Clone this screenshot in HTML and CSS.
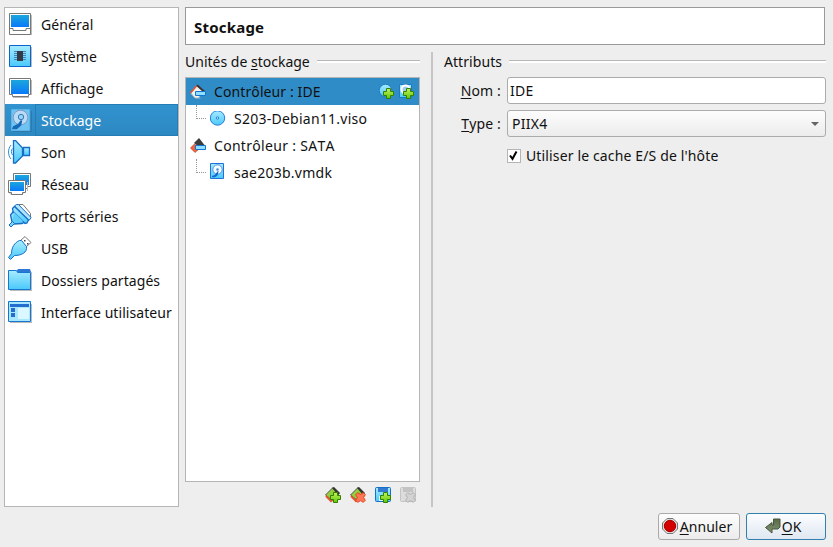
FILE: index.html
```html
<!DOCTYPE html>
<html lang="fr">
<head>
<meta charset="utf-8">
<title>Stockage</title>
<link rel="stylesheet" href="styles.css">
</head>
<body>
<svg class="defs" aria-hidden="true">
  <defs>
    <linearGradient id="screen" x2="0" y2="1"><stop stop-color="#1ba6dc"/><stop offset="1" stop-color="#0879fa"/></linearGradient>
    <linearGradient id="sky" x2="0" y2="1"><stop stop-color="#a8ebff"/><stop offset="1" stop-color="#49c9fa"/></linearGradient>
    <linearGradient id="leaf" x2="0" y2="1"><stop stop-color="#c4f25a"/><stop offset="1" stop-color="#5fc80c"/></linearGradient>
    <linearGradient id="olive" x2="0" y2="1"><stop stop-color="#596a48"/><stop offset="1" stop-color="#819373"/></linearGradient>
    <symbol id="plus" viewBox="0 0 11 11"><path d="M3.500 .5h4v3h3v4h-3v3h-4v-3h-3v-4h3z" fill="url(#leaf)" stroke="#348000"/></symbol>
    <symbol id="cross" viewBox="0 0 11 11"><path d="M.7 2.700 2.700.7 5.500 2.400 8.300.7l2 2L8.600 5.500l1.700 2.800-2 2-2.800-1.700-2.800 1.700-2-2 1.700-2.800z" fill="#ff7654" stroke="#e04420"/></symbol>
    <symbol id="disk" viewBox="0 0 16 16"><path d="M1.500 .5h13v15h-13z" fill="url(#sky)" stroke="#1f72dc"/><circle cx="8.500" cy="6.500" r="4.700" fill="#f4fbff" stroke="#4c93e0"/><circle cx="8.500" cy="6.500" r="1.200" fill="#3f87dc"/><path d="M3 13.500l3-1 3-4-1 4-3 1.500z" fill="#1469cd" stroke="#1469cd"/></symbol>
  </defs>
</svg>
<div class="dialog">
  <nav class="sidebar">
    <div class="item"><svg class="icon" viewBox="0 0 24 24"><path d="M3 23h21V3h-1v19z" fill="#bbb"/><path d="M1.500 1.500h21v21h-21z" fill="#fff" stroke="#777"/><path d="M3 3h18v12H3z" fill="url(#screen)"/><path d="M2 16.500h3v2h13v-2h4" fill="none" stroke="#777"/></svg><span>Général</span></div>
    <div class="item"><svg class="icon" viewBox="0 0 24 24"><path d="M3 23h21V3h-1v19z" fill="#bbb"/><path d="M1.500 1.500h21v21h-21z" fill="url(#sky)" stroke="#0c64d0"/><path d="M6 7.500h12M6 9.500h12M6 11.500h12M6 13.500h12M6 15.500h12" stroke="#3b87bb"/><path d="M9 7h6v10H9z" fill="#353b46"/></svg><span>Système</span></div>
    <div class="item"><svg class="icon" viewBox="0 0 24 24"><path d="M5 21.500h16M23.500 4v15" stroke="#bbb"/><path d="M1.500 2.500h21v16h-2v2h-16v-2h-3z" fill="#fff" stroke="#777"/><path d="M3 4h18v14H3z" fill="url(#screen)"/></svg><span>Affichage</span></div>
    <div class="item selected"><svg class="icon" viewBox="0 0 24 24"><path d="M4 23.500h19.500V3" fill="none" stroke="#3178a8"/><path d="M3.500 1.500h18v21h-18z" fill="#6fc3f3" stroke="#58b5ec"/><circle cx="12.500" cy="9.500" r="7.300" fill="#b8dcf6" stroke="#8495c0"/><circle cx="13" cy="9" r="2.700" fill="#8fd4fb" stroke="#3e79b4"/><path d="M5.500 19l5-2.500 3-4-1 4.500-4 3.500H5z" fill="#1569b9" stroke="#1569b9" stroke-width="1.500"/></svg><span>Stockage</span></div>
    <div class="item"><svg class="icon" viewBox="0 0 24 24"><path d="M5.500 .5h2l7 7.500v8l-7 7h-2z" fill="url(#sky)" stroke="#176dc6" stroke-width="1.300"/><path d="M15.500 7.500h6v8h-6z" fill="url(#sky)" stroke="#176dc6" stroke-width="1.300"/><path d="M4.500 8.500c-1.500 1.500-1.500 5 0 6.500M3 5c-3.300 4-3.300 10 0 14" fill="none" stroke="#2a8ed8"/></svg><span>Son</span></div>
    <div class="item"><svg class="icon" viewBox="0 0 24 24"><path d="M6 1.500h16.500v13h-3v2H9v-2H5.500v-13z" fill="#fff" stroke="#777"/><path d="M7 3h14v10H7z" fill="url(#screen)"/><path d="M1 21h14v1H2M19.500 10v9" stroke="#bbb" fill="none"/><path d="M.5 8.500h17v12h-3v2h-11v-2h-3z" fill="#fff" stroke="#777"/><path d="M2 10h14v9H2z" fill="url(#screen)"/></svg><span>Réseau</span></div>
    <div class="item"><svg class="icon" viewBox="0 0 24 24"><path d="M11 .5h4l7.500 9v4h-3L9 2z" fill="#fff" stroke="#777"/><path d="M5 8L2.500 11l1.500 7 2 2 8-.500 5-3z" fill="url(#sky)" stroke="#176dc6" stroke-width="1.300"/><path d="M6.500 2l2-1.500h2L23 13.500l-1 2-2 1z" fill="#b1e5ff" stroke="#176dc6"/><path d="M4.500 4.500l2-2L20.500 16l-1.500 3-2 .500-12-12z" fill="url(#sky)" stroke="#176dc6" stroke-width="1.300"/><path d="M6 8l9.500 9.500-8 1L5 16z" fill="#5fcdf9"/><path d="M4.500 17.500l2 2-3.500 3.500-2-2z" fill="#75d5fa" stroke="#176dc6"/></svg><span>Ports séries</span></div>
    <div class="item"><svg class="icon" viewBox="0 0 24 24"><path d="M12 5l5-4.500 6 6-5 4.500z" fill="#fff" stroke="#777"/><path d="M16 4h1.500v1.500H16zm3 3h1.500v1.500H19z" fill="#444"/><path d="M11.500 4.500h2l5 6c1 6-5 9-12 9l-4 4-2-2 3-4c0-6 3-11 8-13z" fill="url(#sky)" stroke="#176dc6"/></svg><span>USB</span></div>
    <div class="item"><svg class="icon" viewBox="0 0 24 24"><path d="M2 22.500h22M23.500 4v18" stroke="#bbb"/><path d="M8 4l2-3h12l1 3z" fill="#2c79d5"/><path d="M.5 2.500h8l1 2h13v17H.5z" fill="url(#sky)" stroke="#1976d0"/></svg><span>Dossiers partagés</span></div>
    <div class="item"><svg class="icon" viewBox="0 0 24 24"><path d="M2 22.500h22M23.500 4v18" stroke="#bbb"/><path d="M.5 1.500h22v20H.5z" fill="#a9e7ff" stroke="#1976d0"/><path d="M2 4h19v3H2zM3 8h4v4H3zm0 5h4v4H3z" fill="#246dce"/><path d="M10 8h11v11H10z" fill="#dbf7ff"/></svg><span>Interface utilisateur</span></div>
  </nav>
  <main class="content">
    <h1 class="title">Stockage</h1>
    <div class="panes">
      <section class="units">
        <h2 class="group"><span>Unités de <u>s</u>tockage</span></h2>
        <div class="tree">
          <div class="row current"><svg class="small" viewBox="0 0 16 16"><path d="M1 9 7 2l7 6-6 6H5z" fill="#f3f3ef"/><path d="M.6 9 6.600 1.800" stroke="#ed562b" stroke-width="1.500"/><path d="M7 1.200l7 6.300" stroke="#3b3234" stroke-width="2"/><path d="M.8 9.500l4.500 4.500h5" fill="none" stroke="#bbb"/><path d="M5.500 7.500h10v4h-10z" fill="#8de0ff" stroke="#1674d0"/></svg><span>Contrôleur : IDE</span>
            <div class="actions">
              <svg viewBox="0 0 16 16"><circle cx="6.500" cy="6.500" r="6.300" fill="url(#sky)" stroke="#1d79c4"/><use href="#plus" x="4" y="4" width="11" height="11"/></svg>
              <svg viewBox="0 0 16 16"><path d="M.5 .5h12v13H.5z" fill="url(#sky)" stroke="#1d79c4"/><circle cx="6.500" cy="5.500" r="4" fill="#9bcdf1" stroke="#fff" stroke-width="2"/><use href="#plus" x="4" y="4" width="11" height="11"/></svg>
            </div>
          </div>
          <div class="row child"><i class="branch"></i><svg class="small" viewBox="0 0 16 16"><circle cx="7.500" cy="7" r="7.200" fill="url(#sky)" stroke="#2879dc"/><circle cx="7.500" cy="7" r="1.200" fill="#d8f6ff" stroke="#2879dc"/></svg><span>S203-Debian11.viso</span></div>
          <div class="row sata"><svg class="small" viewBox="0 0 16 16"><path d="M4 5l5-5 5.500 7L9 9z" fill="#3c3c3c"/><path d="M.5 10l4-4 5 4.500L5 14.500z" fill="#f36338" stroke="#b9462a" stroke-width=".7"/><path d="M5.500 7.500h10v4h-10z" fill="#8de0ff" stroke="#1674d0"/></svg><span>Contrôleur : SATA</span></div>
          <div class="row child"><i class="branch"></i><svg class="small drive" viewBox="0 0 16 16"><use href="#disk" width="16" height="16"/></svg><span>sae203b.vmdk</span></div>
        </div>
        <div class="toolbar">
          <svg viewBox="0 0 16 16"><path d="M.5 8 8 .5l6 6-6 7.500z" fill="#93ce3d" stroke="#555"/><path d="M7 1l2-1 6 6-2 2z" fill="#333"/><path d="M1 9l5 5 2-2" fill="none" stroke="#df5832" stroke-width="2"/><use href="#plus" x="5" y="5" width="11" height="11"/></svg>
          <svg viewBox="0 0 16 16"><path d="M.5 8 8 .5l6 6-6 7.500z" fill="#93ce3d" stroke="#555"/><path d="M7 1l2-1 6 6-2 2z" fill="#333"/><path d="M1 9l5 5 2-2" fill="none" stroke="#df5832" stroke-width="2"/><use href="#cross" x="5" y="5" width="11" height="11"/></svg>
          <svg viewBox="0 0 16 16"><rect x=".5" y=".5" width="15" height="14" rx="1" fill="url(#sky)" stroke="#176fc6"/><path d="M3 1h10v4H3z" fill="#337bd0"/><path d="M4 9h8v5H4z" fill="#d9f7ff"/><use href="#plus" x="5" y="5" width="11" height="11"/></svg>
          <svg viewBox="0 0 16 16"><rect x=".5" y=".5" width="15" height="14" rx="1" fill="#dcdcdc" stroke="#c4c4c4"/><path d="M3 1h10v4H3z" fill="#c3c3c3"/><path d="M5.700 7.700l2-2 2.800 1.700 2.800-1.700 2 2-1.700 2.800 1.700 2.800-2 2-2.800-1.700-2.800 1.700-2-2 1.700-2.800z" fill="#d3d3d3" stroke="#b0b0b0"/></svg>
        </div>
      </section>
      <div class="splitter"></div>
      <section class="attributes">
        <h2 class="group"><span>Attributs</span></h2>
        <div class="form">
          <label for="name"><u>N</u>om :</label>
          <div class="field" id="name">IDE</div>
          <label for="type"><u>T</u>ype :</label>
          <div class="field combo" id="type"><span>PIIX4</span><svg width="8" height="4" viewBox="0 0 8 4"><path d="M0 0h8L4 4z" fill="#656565"/></svg></div>
          <div class="check"><span class="box"><svg width="11" height="11" viewBox="0 0 11 11"><path d="M2 5.500 4.500 8.800 8.500 1.500" fill="none" stroke="#000" stroke-width="2"/></svg></span><span>Utiliser le cache E/S de l'hôte</span></div>
        </div>
      </section>
    </div>
  </main>
  <footer class="buttons">
    <button class="button cancel"><svg viewBox="0 0 16 16"><path d="M5 .5h6L15.500 5v6L11 15.500H5L.5 11V5z" fill="#ddd" stroke="#777"/><circle cx="8" cy="8" r="5.700" fill="#d40000" stroke="#a00"/></svg><span><u>A</u>nnuler</span></button>
    <button class="button ok"><svg viewBox="0 0 16 16"><path d="M8.500 1h6.500v8l-2 2H7v4L.5 9.500 7 4.500V7h1.500z" fill="url(#olive)" stroke="#46563b"/></svg><span><u>O</u>K</span></button>
  </footer>
</div>
</body>
</html>
```
FILE: styles.css
```css
* { box-sizing: border-box; }
body {
  margin: 0;
  background: #eee;
  color: #111;
  font: 14px/20px "Noto Sans", sans-serif;
  font-kerning: none;
  letter-spacing: .06px;
}
svg { display: block; flex: none; }
.defs { position: absolute; width: 0; height: 0; }
h1, h2 { margin: 0; }
u { text-decoration: underline; text-decoration-thickness: 1px; text-underline-offset: 2px; text-decoration-skip-ink: none; }
.dialog {
  width: 833px;
  height: 547px;
  padding: 7px 7px 6px 4px;
  display: grid;
  grid-template: 500px 28px / 175px 641px;
  column-gap: 6px;
  row-gap: 6px;
}
.sidebar { background: #fff; border: 1px solid #b5b5b5; }
.item { height: 32px; display: flex; align-items: center; padding-left: 3px; white-space: nowrap; }
.item span { padding-top: 2px; }
.icon { width: 24px; height: 24px; margin-right: 9px; }
.selected { background: linear-gradient(#3193cf, #2d88c1); color: #fff; position: relative; }
.selected::after { content: ""; position: absolute; inset: 0 0 0 30px; border: 1px solid #267db6; }
.content { display: flex; flex-direction: column; }
.title { width: 640px; height: 38px; border: 1px solid #999; background: #fff; padding: 9px 8px; font-size: 15px; line-height: 20px; letter-spacing: .2px; }
.panes { flex: 1; display: flex; padding-top: 7px; }
.units { width: 235px; height: 455px; }
.group { height: 19px; display: flex; align-items: center; gap: 7px; font-size: 14px; font-weight: 400; white-space: nowrap; }
.group::after { content: ""; flex: 1; height: 2px; border-top: 1px solid #b8b8b8; background: #fff; }
.units .group { letter-spacing: 0; }
.tree { height: 405px; margin-top: 6px; border: 1px solid #b5b5b5; background: #fff; letter-spacing: .1px; }
.row { height: 27px; display: flex; align-items: center; padding-left: 4px; white-space: nowrap; }
.small { width: 16px; height: 16px; margin-right: 8px; }
.current { background: #308cc6; }
.actions { margin-left: auto; padding-right: 4px; display: flex; gap: 4px; }
.actions svg { width: 16px; height: 16px; }
.child { padding-left: 10px; letter-spacing: .25px; }
.sata { letter-spacing: .3px; }
.drive { margin: -4px 9px 0 -1px; }
.branch { width: 10px; height: 14px; margin-right: 4px; align-self: flex-start; border-left: 1px dotted #999; border-bottom: 1px dotted #999; }
.toolbar { display: flex; justify-content: flex-end; gap: 9px; padding: 5px 4px 0 0; }
.toolbar svg { width: 16px; height: 16px; }
.splitter { width: 2px; height: 455px; margin: 0 11px; background: #c5c5c5; }
.attributes { width: 382px; }
.form { display: grid; grid-template-columns: 57px 319px; grid-template-rows: 27px 27px 25px; column-gap: 6px; row-gap: 6px; padding-top: 6px; }
.form label { text-align: right; line-height: 27px; white-space: nowrap; letter-spacing: .15px; }
.field { height: 27px; border: 1px solid #ababab; border-radius: 3px; background: #fff; padding: 0 2px; line-height: 25px; letter-spacing: .3px; }
.combo { display: flex; align-items: center; justify-content: space-between; padding: 0 6px 0 4px; background: linear-gradient(#fdfdfd, #ececec); letter-spacing: .3px; }
.check { grid-column: 2; display: flex; align-items: center; gap: 6px; white-space: nowrap; letter-spacing: .14px; }
.box { width: 14px; height: 14px; border: 1px solid #b5b5b5; background: #fff; margin-right: -1px; }
.buttons { grid-column: 1 / -1; display: flex; justify-content: flex-end; gap: 6px; }
.button { height: 27px; display: flex; align-items: center; justify-content: center; border: 1px solid #aaa; border-radius: 3px; padding: 0; font: inherit; letter-spacing: inherit; color: inherit; background: linear-gradient(#fdfdfd, #ececec); }
.button svg { width: 16px; height: 16px; margin-top: -2px; }
.cancel { width: 82px; gap: 2px; padding-right: 4px; }
.ok { width: 80px; gap: 1px; padding-right: 6px; border-color: #307fad; background: linear-gradient(#fcfdff, #dfe7f1); }
```
